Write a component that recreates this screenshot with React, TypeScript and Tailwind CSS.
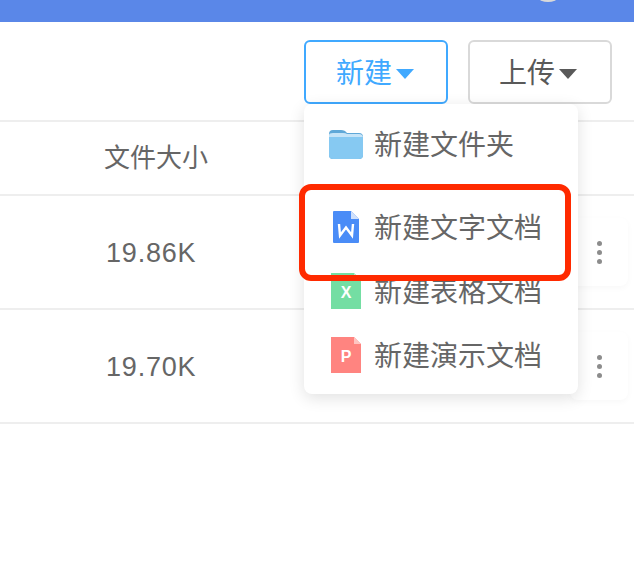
import type { ReactNode } from 'react';

const FONT = "font-['Liberation_Sans','Noto_Sans_CJK_SC',sans-serif]";

function Caret() {
  return (
    <svg width="18" height="10" viewBox="0 0 18 10">
      <path d="M0 0H18L9 10Z" fill="currentColor" />
    </svg>
  );
}

function FolderIcon() {
  return (
    <svg width="34" height="29" viewBox="0 0 34 29">
      <path d="M0 4Q0 0 4 0H12Q16 0 18 3H30Q34 3 34 7V25Q34 29 30 29H4Q0 29 0 25Z" fill="#5fa8d8" />
      <path d="M0 5Q0 3 4 3H14Q17 3 18 4H30Q34 4 34 8V10H0Z" fill="#c5e4f8" />
      <path d="M0 7H34V25Q34 29 30 29H4Q0 29 0 25Z" fill="#86c9f2" />
    </svg>
  );
}

function WordIcon() {
  return (
    <svg width="26" height="32" viewBox="0 0 26 32">
      <path d="M1 0H18L26 8V31Q26 32 25 32H1Q0 32 0 31V1Q0 0 1 0Z" fill="#4a8cf7" />
      <path d="M18 0L26 8H18Z" fill="#cfe0fc" />
      <path d="M6 13L7 24.5L13 16.5L19 24.5L20 13" fill="none" stroke="#fff" strokeWidth="2.4" />
    </svg>
  );
}

function SheetIcon({ fill, fold, letter }: { fill: string; fold: string; letter: string }) {
  return (
    <svg width="30" height="36" viewBox="0 0 30 36">
      <path d="M0 0H23L30 7V36H0Z" fill={fill} />
      <path d="M23 0L30 7H23Z" fill={fold} />
      <text x="15" y="24.5" textAnchor="middle" fontSize="16" fontWeight="700" fill="#fff" fontFamily="Liberation Sans, sans-serif">
        {letter}
      </text>
    </svg>
  );
}

function MenuItem({ icon, label, className }: { icon: ReactNode; label: string; className?: string }) {
  return (
    <div className={`flex h-16 items-center gap-[11px] pl-[25px] ${className ?? ''}`}>
      <div className="flex w-[34px] justify-center">{icon}</div>
      <span className="pt-[3px] text-[28px] leading-none text-[#666]">{label}</span>
    </div>
  );
}

function FileRow({ size }: { size: string }) {
  return (
    <div className="flex h-[114px] items-center justify-between border-b-2 border-[#eeeeee] pl-[106px] pr-1.5">
      <span className="pt-0.5 text-[27px] tracking-[0.8px] text-[#666]">{size}</span>
      <div className="flex h-[68px] w-[58px] flex-col items-center justify-center gap-[4px] rounded-lg shadow-[0_2px_6px_rgba(0,0,0,0.03)]">
        <span className="h-[5px] w-[5px] rounded-full bg-[#8c8c8c]" />
        <span className="h-[5px] w-[5px] rounded-full bg-[#8c8c8c]" />
        <span className="h-[5px] w-[5px] rounded-full bg-[#8c8c8c]" />
      </div>
    </div>
  );
}

export default function App() {
  return (
    <div className={`relative h-[574px] w-[634px] overflow-hidden bg-white ${FONT}`}>
      {/* Top bar */}
      <div className="relative h-[22px] overflow-hidden bg-[#5a87e8]">
        <div className="absolute left-[530px] top-[-34px] h-9 w-9 rounded-full bg-[#d9d9d9]" />
      </div>

      {/* Toolbar */}
      <div className="flex h-[100px] justify-end gap-5 border-b-2 border-[#eeeeee] pr-[22px] pt-[18px]">
        <button className="flex h-16 w-36 items-center justify-center gap-[4px] rounded-md border-2 border-[#40a9ff] bg-white pr-[2px] pt-[3px] text-[28px] text-[#40a9ff]">
          新建
          <Caret />
        </button>
        <button className="flex h-16 w-36 items-center justify-center gap-[4px] rounded-md border-2 border-[#d9d9d9] bg-white pr-1 pt-[3px] text-[28px] text-[#595959]">
          上传
          <Caret />
        </button>
      </div>

      {/* Table */}
      <div className="flex h-[74px] items-center border-b-2 border-[#eeeeee] pl-[104px]">
        <span className="text-[26px] text-[#666]">文件大小</span>
      </div>
      <FileRow size="19.86K" />
      <FileRow size="19.70K" />

      {/* Dropdown */}
      <div className="absolute left-[304px] top-[104px] w-[274px] rounded-lg bg-white pb-[7px] pt-2 shadow-[0_4px_16px_rgba(0,0,0,0.12)]">
        <MenuItem icon={<FolderIcon />} label="新建文件夹" />
        <MenuItem icon={<WordIcon />} label="新建文字文档" className="mt-[19px]" />
        <MenuItem icon={<SheetIcon fill="#74dea3" fold="#b5eecd" letter="X" />} label="新建表格文档" />
        <MenuItem icon={<SheetIcon fill="#ff8480" fold="#ffc4c1" letter="P" />} label="新建演示文档" />
      </div>

      {/* Red annotation */}
      <div className="absolute left-[299px] top-[184px] h-[97px] w-[272px] rounded-xl border-[6px] border-[#ff2a00]" />
    </div>
  );
}
